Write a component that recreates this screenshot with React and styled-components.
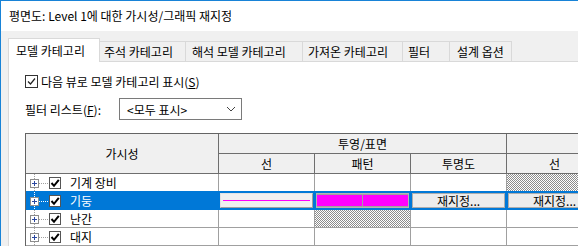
import styled, { createGlobalStyle } from 'styled-components'

const GlobalStyle = createGlobalStyle`
  html, body {
    margin: 0;
    padding: 0;
    background: #f0f0f0;
    overflow: hidden;
  }
  body {
    font-family: "Noto Sans CJK KR", "Noto Sans", sans-serif;
    font-size: 12px;
    color: #000;
  }
`

const Window = styled.div`
  width: 578px;
  height: 246px;
  box-sizing: border-box;
  border-top: 1px solid #1883d7;
  border-left: 1px solid #1883d7;
  background: #f0f0f0;
  overflow: hidden;
  display: flex;
  flex-direction: column;
`

const TitleBar = styled.div`
  flex: none;
  height: 30px;
  background: #fff;
  display: flex;
  align-items: center;
  padding-left: 8px;
  line-height: 1;
`

const Body = styled.div`
  flex: 1;
  display: flex;
  flex-direction: column;
  padding: 7px 0 0 7px;
  min-width: 0;
`

const TabStrip = styled.div`
  display: flex;
  align-items: flex-end;
  height: 23px;
  flex: none;
`

const Tab = styled.div`
  box-sizing: border-box;
  width: ${p => p.$w}px;
  height: ${p => (p.$active ? 24 : 20)}px;
  margin-bottom: ${p => (p.$active ? -1 : 0)}px;
  padding: 0 0 1px ${p => p.$pad}px;
  display: flex;
  align-items: center;
  white-space: nowrap;
  background: ${p => (p.$active ? '#fff' : '#f0f0f0')};
  border-top: 1px solid #d9d9d9;
  border-right: 1px solid #d9d9d9;
  border-left: ${p => (p.$active ? '1px solid #d9d9d9' : 'none')};
  position: relative;
  z-index: ${p => (p.$active ? 1 : 0)};
`

const Panel = styled.div`
  flex: 1;
  background: #fff;
  border-top: 1px solid #d9d9d9;
  border-left: 1px solid #d9d9d9;
  padding: 13px 0 0 16px;
  min-width: 0;
`

const CheckRow = styled.div`
  display: flex;
  align-items: center;
  height: 13px;
  gap: 3px;
  white-space: nowrap;
`

const Box = styled.span`
  box-sizing: border-box;
  width: 13px;
  height: 13px;
  border: 1px solid #333;
  background: #fff;
  display: flex;
  align-items: center;
  justify-content: center;
  flex: none;
`

const Key = styled.span`
  text-decoration: underline;
`

const FilterRow = styled.div`
  display: flex;
  align-items: center;
  height: 22px;
  margin-top: 10px;
`

const FieldLabel = styled.span`
  width: 94px;
  white-space: nowrap;
`

const Select = styled.div`
  box-sizing: border-box;
  width: 123px;
  height: 22px;
  border: 1px solid #7a7a7a;
  background: #fff;
  display: flex;
  align-items: center;
  justify-content: space-between;
  padding: 0 5px 0 7px;
`

const Grid = styled.div`
  margin-top: 13px;
  display: grid;
  grid-template-columns: 193px repeat(5, 96px);
  grid-template-rows: 20px 20px repeat(4, 18px);
  width: max-content;
  border-top: 1px solid #646464;
  border-left: 1px solid #646464;
`

const HeadCell = styled.div`
  box-sizing: border-box;
  background: #f0f0f0;
  border-right: 1px solid #6e6e6e;
  border-bottom: 1px solid #6e6e6e;
  display: flex;
  align-items: center;
  justify-content: center;
  grid-column: span ${p => p.$cols || 1};
  grid-row: span ${p => p.$rows || 1};
  white-space: nowrap;
`

const Cell = styled.div`
  box-sizing: border-box;
  border-right: 1px solid ${p => (p.$selected ? '#0078d7' : '#a0a0a0')};
  border-bottom: 1px solid ${p => (p.$selected ? '#0078d7' : '#a0a0a0')};
  background: ${p => (p.$selected ? '#0078d7' : '#fff')};
  box-shadow: ${p => (p.$selected ? '0 -1px 0 #0078d7' : 'none')};
  display: flex;
  align-items: center;
  padding: 1px;
  min-width: 0;
  ${p =>
    p.$hatch &&
    `background: repeating-conic-gradient(#8c8c8c 0% 25%, #fff 0% 50%) 0 0 / 2px 2px;`}
`

const TreeCell = styled(Cell)`
  padding: 0;
  color: ${p => (p.$selected ? '#fff' : '#000')};
  white-space: nowrap;
`

const RowCheck = styled.span`
  box-sizing: border-box;
  width: 12px;
  height: 12px;
  margin: 1px 9px 0 1px;
  border: 1px solid #555;
  background: #fff;
  display: flex;
  align-items: center;
  justify-content: center;
  flex: none;
`

const LineSwatch = styled.div`
  box-sizing: border-box;
  flex: 1;
  height: 15px;
  border: 1px solid #a0a0a0;
  border-top-color: #e3e3e3;
  border-left-color: #e3e3e3;
  background: #f0f0f0;
  display: flex;
  align-items: center;
  padding: 0 2px;

  &::after {
    content: '';
    flex: 1;
    height: 1px;
    background: #ff00ff;
  }
`

const PatternSwatch = styled.div`
  box-sizing: border-box;
  flex: 1;
  height: 15px;
  border: 1px solid #b4b4b4;
  background: #a0a0a0;
  display: flex;
  gap: 1px;
  padding: 1px 0;
`

const Magenta = styled.span`
  flex: 1;
  background: #ff00ff;
`

const Button = styled.div`
  box-sizing: border-box;
  flex: 1;
  height: 15px;
  border: 1px solid #adadad;
  background: #ececec;
  display: flex;
  align-items: center;
  justify-content: center;
  line-height: 1;
  white-space: nowrap;
`

const Check = ({ size = 9 }) => (
  <svg width={size} height={size} viewBox="0 0 9 9">
    <path d="M1 4.5 L3.5 7 L8 1.5" fill="none" stroke="#222" strokeWidth="1.2" />
  </svg>
)

const BoldCheck = () => (
  <svg width="10" height="10" viewBox="0 0 10 10">
    <path d="M1.5 5 L4 7.8 L8.8 1.8" fill="none" stroke="#000" strokeWidth="2" />
  </svg>
)

const Chevron = () => (
  <svg width="10" height="6" viewBox="0 0 10 6">
    <path d="M1 1 L5 5 L9 1" fill="none" stroke="#444" strokeWidth="1" />
  </svg>
)

const TreeLines = ({ color }) => (
  <svg width="22" height="17" viewBox="0 0 22 17" shapeRendering="crispEdges" style={{ flex: 'none' }}>
    <line x1="8.5" y1="0" x2="8.5" y2="5" stroke={color} strokeDasharray="1 1" />
    <line x1="8.5" y1="14" x2="8.5" y2="17" stroke={color} strokeDasharray="1 1" />
    <line x1="13" y1="9.5" x2="22" y2="9.5" stroke={color} strokeDasharray="1 1" />
    <rect x="4.5" y="5.5" width="8" height="8" fill="#fff" stroke="#8c8c8c" />
    <line x1="6" y1="9.5" x2="11" y2="9.5" stroke="#2b48a0" />
    <line x1="8.5" y1="7" x2="8.5" y2="12" stroke="#2b48a0" />
  </svg>
)

const tabs = [
  { label: '모델 카테고리', w: 92, pad: 7, active: true },
  { label: '주석 카테고리', w: 86, pad: 4 },
  { label: '해석 모델 카테고리', w: 117, pad: 6 },
  { label: '가져온 카테고리', w: 100, pad: 5 },
  { label: '필터', w: 47, pad: 5 },
  { label: '설계 옵션', w: 62, pad: 7 },
]

const rows = [
  { name: '기계 장비', hatch: [3] },
  { name: '기둥', selected: true },
  { name: '난간', hatch: [1] },
  { name: '대지', hatch: [] },
]

const SelectedContent = ({ index }) => {
  if (index === 0) return <LineSwatch />
  if (index === 1) return (
    <PatternSwatch>
      <Magenta />
      <Magenta />
    </PatternSwatch>
  )
  if (index === 2 || index === 3) return <Button>재지정...</Button>
  return null
}

export default function App() {
  return (
    <>
      <GlobalStyle />
      <Window>
        <TitleBar>평면도: Level 1에 대한 가시성/그래픽 재지정</TitleBar>
        <Body>
          <TabStrip>
            {tabs.map(t => (
              <Tab key={t.label} $w={t.w} $pad={t.pad} $active={t.active}>
                {t.label}
              </Tab>
            ))}
          </TabStrip>
          <Panel>
            <CheckRow>
              <Box><Check /></Box>
              <span>다음 뷰로 모델 카테고리 표시(<Key>S</Key>)</span>
            </CheckRow>
            <FilterRow>
              <FieldLabel>필터 리스트(<Key>F</Key>):</FieldLabel>
              <Select>
                <span>&lt;모두 표시&gt;</span>
                <Chevron />
              </Select>
            </FilterRow>
            <Grid>
              <HeadCell $rows={2}>가시성</HeadCell>
              <HeadCell $cols={3}>투영/표면</HeadCell>
              <HeadCell $cols={2} />
              <HeadCell>선</HeadCell>
              <HeadCell>패턴</HeadCell>
              <HeadCell>투명도</HeadCell>
              <HeadCell>선</HeadCell>
              <HeadCell />
              {rows.map(r => (
                <Row key={r.name} row={r} />
              ))}
            </Grid>
          </Panel>
        </Body>
      </Window>
    </>
  )
}

const Row = ({ row }) => (
  <>
    <TreeCell $selected={row.selected}>
      <TreeLines color={row.selected ? '#fff' : '#a0a0a0'} />
      <RowCheck><BoldCheck /></RowCheck>
      {row.name}
    </TreeCell>
    {[0, 1, 2, 3, 4].map(i => (
      <Cell key={i} $selected={row.selected} $hatch={!row.selected && row.hatch.includes(i)}>
        {row.selected && <SelectedContent index={i} />}
      </Cell>
    ))}
  </>
)
